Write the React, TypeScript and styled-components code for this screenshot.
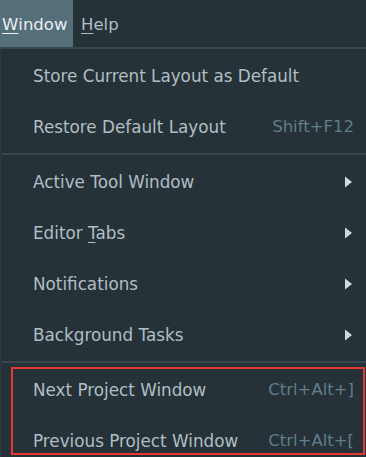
import React from "react";
import styled, { createGlobalStyle } from "styled-components";

const Global = createGlobalStyle`
  html, body { margin: 0; padding: 0; background: #263238; }
  body { font-family: "DejaVu Sans", "Open Sans", sans-serif; }
`;

const Page = styled.div`
  width: 366px;
  height: 457px;
  background: #263238;
  overflow: hidden;
  display: flex;
  flex-direction: column;
  & > * { flex-shrink: 0; }
`;

const MenuBar = styled.div`
  display: flex;
  height: 47px;
  flex-shrink: 0;
  border-bottom: 2px solid #37474f;
  box-sizing: content-box;
`;

const BarItem = styled.div<{ $active?: boolean }>`
  display: flex;
  align-items: center;
  padding: 1px 8px 0 2px;
  margin-right: 6px;
  background: ${(p) => (p.$active ? "#546e7a" : "transparent")};
  color: ${(p) => (p.$active ? "#eceff1" : "#b0bec5")};
  font-size: 16.5px;
  width: ${(p) => (p.$active ? "63px" : "auto")};
`;

const Mn = styled.span`
  text-decoration: underline;
  text-underline-offset: 3px;
`;

const Popup = styled.div`
  display: flex;
  flex-direction: column;
  flex-shrink: 0;
  padding-top: 1px;
  border-left: 1px solid #2c3a41;
  & > * { flex-shrink: 0; }
`;

const Row = styled.div`
  display: flex;
  align-items: center;
  flex-shrink: 0;
  height: 51px;
  padding: 0 12px 0 32px;
  color: #b0bec5;
  font-size: 16.8px;
`;

const Label = styled.span`
  flex: 1;
  white-space: nowrap;
`;

const Shortcut = styled.span`
  color: #607d8b;
  font-size: 16.5px;
  white-space: nowrap;
`;

const Sep = styled.div`
  height: 2px;
  flex-shrink: 0;
  margin: 1px 0 1px 1px;
  background: #37474f;
`;

const Marked = styled.div`
  position: relative;
  display: flex;
  flex-direction: column;
  flex-shrink: 0;
`;

const RedBox = styled.div`
  position: absolute;
  top: 3px;
  left: 10px;
  right: 1px;
  height: 88px;
  box-sizing: border-box;
  border: 2px solid #e53935;
  pointer-events: none;
`;

const Arrow = () => (
  <svg width="9" height="12" viewBox="0 0 9 12" style={{ marginRight: 1 }}>
    <path d="M1 0.5 L8 6 L1 11.5 Z" fill="#cfd8dc" />
  </svg>
);

export default function App() {
  return (
    <>
      <Global />
      <Page>
        <MenuBar>
          <BarItem $active>
            <Mn>W</Mn>indow
          </BarItem>
          <BarItem>
            <Mn>H</Mn>elp
          </BarItem>
        </MenuBar>
        <Popup>
          <Row>
            <Label>Store Current Layout as Default</Label>
          </Row>
          <Row>
            <Label>Restore Default Layout</Label>
            <Shortcut>Shift+F12</Shortcut>
          </Row>
          <Sep />
          <Row>
            <Label>Active Tool Window</Label>
            <Arrow />
          </Row>
          <Row>
            <Label>
              Editor <Mn>T</Mn>abs
            </Label>
            <Arrow />
          </Row>
          <Row>
            <Label>Notifications</Label>
            <Arrow />
          </Row>
          <Row>
            <Label>Background Tasks</Label>
            <Arrow />
          </Row>
          <Sep />
          <Marked>
            <Row>
              <Label>Next Project Window</Label>
              <Shortcut>Ctrl+Alt+]</Shortcut>
            </Row>
            <Row>
              <Label>Previous Project Window</Label>
              <Shortcut>Ctrl+Alt+[</Shortcut>
            </Row>
            <RedBox />
          </Marked>
        </Popup>
      </Page>
    </>
  );
}
